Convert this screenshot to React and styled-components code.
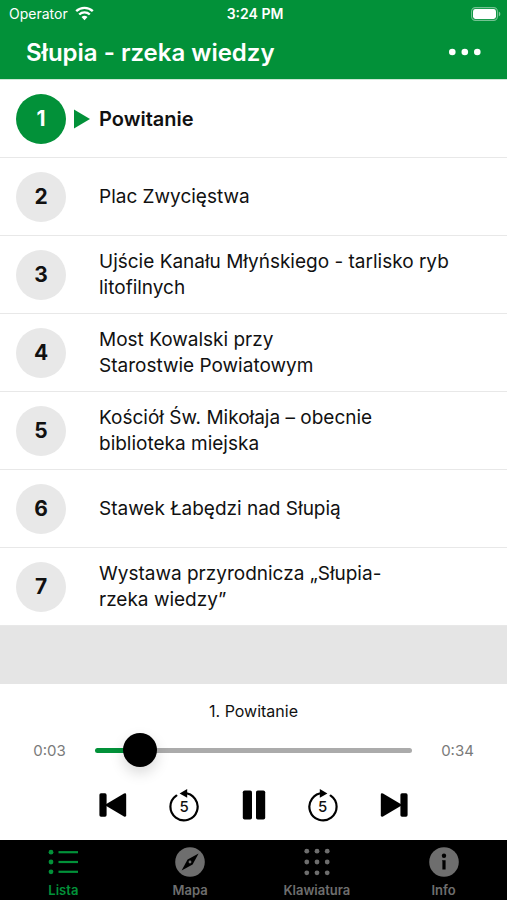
//libs
import styled, { createGlobalStyle } from "styled-components";
import { useState } from "react";

const TRACKS = [
    { id: 1, title: "Powitanie" },
    { id: 2, title: "Plac Zwycięstwa" },
    { id: 3, title: "Ujście Kanału Młyńskiego - tarlisko ryb litofilnych" },
    { id: 4, title: "Most Kowalski przy Starostwie\u00a0Powiatowym" },
    { id: 5, title: "Kościół Św. Mikołaja – obecnie biblioteka miejska" },
    { id: 6, title: "Stawek Łabędzi nad Słupią" },
    { id: 7, title: "Wystawa przyrodnicza „Słupia-rzeka\u00a0wiedzy”" },
];

const TABS = [
    { name: "Lista", Icon: ListIcon },
    { name: "Mapa", Icon: CompassIcon },
    { name: "Klawiatura", Icon: KeypadIcon },
    { name: "Info", Icon: InfoIcon },
];

const DURATION = 34;

function formatTime(seconds){
    const rest = Math.floor(seconds % 60);
    return `${Math.floor(seconds / 60)}:${String(rest).padStart(2, "0")}`;
}

export default function App(){
    const [ current, setCurrent ] = useState(1);
    const [ time, setTime ] = useState(3.4);
    const [ playing, setPlaying ] = useState(true);
    const [ tab, setTab ] = useState("Lista");

    function selectTrack(id){
        if(id < 1 || id > TRACKS.length) return;
        setCurrent(id);
        setTime(0);
    }

    function skip(seconds){
        setTime(Math.min(DURATION, Math.max(0, time + seconds)));
    }

    return(
        <Screen>
            <GlobalStyle />
            <Header>
                <StatusBar>
                    <Operator>Operator <WifiIcon /></Operator>
                    <Clock>3:24 PM</Clock>
                    <BatteryIcon />
                </StatusBar>
                <TitleBar>
                    <Title>Słupia - rzeka wiedzy</Title>
                    <MenuButton aria-label="Menu"><DotsIcon /></MenuButton>
                </TitleBar>
            </Header>
            <TrackList>
                {TRACKS.map(({ id, title }) => (
                    <li key={id}>
                        <Track $active={id === current} onClick={() => selectTrack(id)}>
                            <TrackNumber $active={id === current}>{id}</TrackNumber>
                            <Marker>{id === current && <PlayMarkIcon />}</Marker>
                            <TrackTitle>{title}</TrackTitle>
                        </Track>
                    </li>
                ))}
            </TrackList>
            <Player>
                <NowPlaying>{current}. {TRACKS[current - 1].title}</NowPlaying>
                <Progress>
                    <Time>{formatTime(time)}</Time>
                    <Slider
                        type="range"
                        aria-label="Postęp"
                        min="0"
                        max={DURATION}
                        step="0.1"
                        value={time}
                        onChange={(e) => setTime(Number(e.target.value))}
                        style={{ "--played": `${(time / DURATION) * 100}%` }}
                    />
                    <Time>{formatTime(DURATION)}</Time>
                </Progress>
                <Controls>
                    <ControlButton aria-label="Poprzedni" onClick={() => selectTrack(current - 1)}><PreviousIcon /></ControlButton>
                    <ControlButton aria-label="Cofnij o 5 sekund" onClick={() => skip(-5)}>
                        <SkipLoop><RewindIcon /><span>5</span></SkipLoop>
                    </ControlButton>
                    <ControlButton aria-label={playing ? "Pauza" : "Odtwórz"} onClick={() => setPlaying(!playing)}>
                        {playing ? <PauseIcon /> : <PlayIcon />}
                    </ControlButton>
                    <ControlButton aria-label="Przewiń o 5 sekund" onClick={() => skip(5)}>
                        <SkipLoop><ForwardIcon /><span>5</span></SkipLoop>
                    </ControlButton>
                    <ControlButton aria-label="Następny" onClick={() => selectTrack(current + 1)}><NextIcon /></ControlButton>
                </Controls>
            </Player>
            <TabBar>
                {TABS.map(({ name, Icon }) => (
                    <Tab key={name} $active={name === tab} onClick={() => setTab(name)}>
                        <Icon />
                        {name}
                    </Tab>
                ))}
            </TabBar>
        </Screen>
    );
}

//icons
function WifiIcon(){
    return(
        <svg width="19" height="15" viewBox="0 0 19 15" fill="none" stroke="#fff" strokeWidth="2.4">
            <path d="M1.2 5.2a12 12 0 0 1 16.6 0" />
            <path d="M4.2 8.5a7.6 7.6 0 0 1 10.6 0" />
            <path d="M9.5 14.2l-3-3.1a4.3 4.3 0 0 1 6 0z" fill="#fff" stroke="none" />
        </svg>
    );
}

function BatteryIcon(){
    return(
        <svg width="30" height="14" viewBox="0 0 30 14">
            <rect x="0.6" y="0.6" width="25.8" height="12.8" rx="3.8" fill="none" stroke="#fff" strokeOpacity="0.45" strokeWidth="1.1" />
            <rect x="2" y="2" width="23" height="10" rx="2.4" fill="#fff" />
            <path d="M27.8 4.6a2.6 2.6 0 0 1 0 4.8z" fill="#fff" fillOpacity="0.5" />
        </svg>
    );
}

function DotsIcon(){
    return(
        <svg width="32" height="8" viewBox="0 0 32 8" fill="#fff">
            <circle cx="3.3" cy="4" r="3.3" />
            <circle cx="15.8" cy="4" r="3.3" />
            <circle cx="28.3" cy="4" r="3.3" />
        </svg>
    );
}

function PlayMarkIcon(){
    return(
        <svg width="16" height="20" viewBox="0 0 16 20" fill="#029139">
            <path d="M0 0.5L16 10L0 19.5z" />
        </svg>
    );
}

function PreviousIcon(){
    return(
        <svg width="28" height="24" viewBox="0 0 28 24">
            <rect x="0.4" y="0.3" width="7.2" height="23.4" rx="1.6" />
            <path d="M6.5 12.6v-1.2L25 0.6q2.2-0.8 2.2 1.2v20.4q0 2-2.2 1.2z" />
        </svg>
    );
}

function NextIcon(){
    return(
        <svg width="28" height="24" viewBox="0 0 28 24">
            <rect x="20.4" y="0.3" width="7.2" height="23.4" rx="1.6" />
            <path d="M21.5 12.6v-1.2L3 0.6Q0.8-0.2 0.8 1.8v20.4q0 2 2.2 1.2z" />
        </svg>
    );
}

function RewindIcon(){
    return(
        <svg width="32" height="34" viewBox="0 0 32 34">
            <path d="M16 5.2A13.6 13.6 0 1 1 8.3 7.6" fill="none" stroke="#000" strokeWidth="2.2" strokeLinecap="round" />
            <path d="M11.6 5.4L19.2 1v8.8z" />
        </svg>
    );
}

function ForwardIcon(){
    return(
        <svg width="32" height="34" viewBox="0 0 32 34">
            <path d="M16 5.2A13.6 13.6 0 1 0 23.7 7.6" fill="none" stroke="#000" strokeWidth="2.2" strokeLinecap="round" />
            <path d="M20.4 5.4L12.8 1v8.8z" />
        </svg>
    );
}

function PauseIcon(){
    return(
        <svg width="24" height="30" viewBox="0 0 24 30">
            <rect x="0.8" y="0.4" width="9.2" height="29.2" rx="1.8" />
            <rect x="14" y="0.4" width="9.2" height="29.2" rx="1.8" />
        </svg>
    );
}

function PlayIcon(){
    return(
        <svg width="24" height="30" viewBox="0 0 24 30">
            <path d="M1 1L23 15L1 29z" />
        </svg>
    );
}

function ListIcon(){
    return(
        <svg width="30" height="30" viewBox="0 0 30 30" fill="currentColor">
            <circle cx="3" cy="5.2" r="2.4" />
            <circle cx="3" cy="15" r="2.4" />
            <circle cx="3" cy="24.8" r="2.4" />
            <rect x="10.5" y="4.1" width="19.5" height="2.2" />
            <rect x="10.5" y="13.9" width="19.5" height="2.2" />
            <rect x="10.5" y="23.7" width="19.5" height="2.2" />
        </svg>
    );
}

function CompassIcon(){
    return(
        <svg width="30" height="30" viewBox="0 0 30 30">
            <circle cx="15" cy="15" r="14.8" fill="currentColor" />
            <path d="M23.6 6.6L17.6 17.4L6.6 23.4L12.6 12.6z" fill="#000" />
            <circle cx="15" cy="15" r="1.4" fill="currentColor" />
        </svg>
    );
}

function KeypadIcon(){
    const rows = [4.2, 15, 25.8];
    const columns = [4.8, 15, 25.2];

    return(
        <svg width="30" height="30" viewBox="0 0 30 30" fill="currentColor">
            {rows.map((cy) => columns.map((cx) => <circle key={`${cx}-${cy}`} cx={cx} cy={cy} r="2.4" />))}
        </svg>
    );
}

function InfoIcon(){
    return(
        <svg width="30" height="30" viewBox="0 0 30 30">
            <circle cx="15" cy="15" r="14.8" fill="currentColor" />
            <circle cx="15" cy="8.8" r="2.2" fill="#000" />
            <path d="M13 13.2h3.6v9.4h-3.2v-8z" fill="#000" />
        </svg>
    );
}

const GlobalStyle = createGlobalStyle`
    * {
        box-sizing: border-box;
    }

    body {
        margin: 0;
        font-family: 'Inter', 'Liberation Sans', sans-serif;
        color: #111111;
    }

    button {
        padding: 0;
        border: none;
        background: none;
        font-family: inherit;
        color: inherit;
        cursor: pointer;
    }

    svg {
        display: block;
        flex-shrink: 0;
    }
`

const Screen = styled.div`
    min-height: 100vh;
    display: flex;
    flex-direction: column;
`

const Header = styled.header`
    padding-bottom: 2px;
    border-bottom: 1px solid #CDE8D6;
    background: #029139;
    color: #FFFFFF;
`

const StatusBar = styled.div`
    height: 27px;
    padding: 0 6px 0 9px;
    display: grid;
    grid-template-columns: 1fr auto 1fr;
    align-items: center;
    font-size: 14px;

    > :last-child {
        justify-self: end;
    }
`

const Operator = styled.span`
    display: flex;
    align-items: center;
    gap: 7px;
`

const Clock = styled.span`
    font-weight: 600;
`

const TitleBar = styled.div`
    height: 50px;
    padding: 0 26px;
    display: flex;
    align-items: center;
    justify-content: space-between;
`

const Title = styled.h1`
    margin: 0;
    font-weight: 600;
    font-size: 24px;
`

const MenuButton = styled.button`
    height: 32px;
`

const TrackList = styled.ol`
    flex: 1;
    margin: 0;
    padding: 0 0 57px;
    list-style: none;
    background: #E5E5E5;
`

const Track = styled.button`
    width: 100%;
    min-height: 78px;
    padding: 13px 48px 12px 16px;
    display: flex;
    align-items: center;
    border-bottom: 1px solid #E8E8E8;
    background: #FFFFFF;
    text-align: left;
    font-weight: ${(props) => props.$active ? 600 : 400};
    font-size: ${(props) => props.$active ? 20 : 19}px;
    line-height: 26px;
`

const TrackNumber = styled.span`
    width: 50px;
    height: 50px;
    flex-shrink: 0;
    display: flex;
    align-items: center;
    justify-content: center;
    border-radius: 50%;
    background: ${(props) => props.$active ? "#029139" : "#E8E8E8"};
    color: ${(props) => props.$active ? "#FFFFFF" : "#111111"};
    font-weight: 700;
    font-size: 21px;
`

const Marker = styled.span`
    width: 33px;
    flex-shrink: 0;
    padding-left: 8px;
`

const TrackTitle = styled.span`
    flex: 1;
`

const Player = styled.section`
    padding: 15px 32px 17px;
    background: #FFFFFF;
`

const NowPlaying = styled.p`
    margin: 0 0 10px;
    text-align: center;
    font-size: 16px;
    line-height: 24px;
`

const Progress = styled.div`
    height: 34px;
    display: flex;
    align-items: center;
    justify-content: space-between;
    gap: 28px;
`

const Time = styled.span`
    width: 35px;
    text-align: center;
    white-space: nowrap;
    font-size: 15px;
    color: #7A7A7A;
`

const Slider = styled.input`
    flex: 1;
    min-width: 0;
    height: 34px;
    margin: 0;
    appearance: none;
    background: none;

    &::-webkit-slider-runnable-track {
        height: 5px;
        border-radius: 3px;
        background: linear-gradient(to right, #029139 var(--played), #ABABAB var(--played));
    }

    &::-webkit-slider-thumb {
        appearance: none;
        width: 34px;
        height: 34px;
        margin-top: -15px;
        border-radius: 50%;
        background: #000000;
        box-shadow: 0 6px 14px rgba(0, 0, 0, 0.15);
    }
`

const Controls = styled.div`
    margin-top: 20px;
    padding: 0 67px;
    display: flex;
    align-items: center;
    justify-content: space-between;
`

const ControlButton = styled.button`
    height: 36px;
    display: flex;
    align-items: center;
    justify-content: center;
`

const SkipLoop = styled.span`
    display: grid;
    place-items: center;

    > * {
        grid-area: 1 / 1;
    }

    span {
        padding-top: 4px;
        font-weight: 500;
        font-size: 15px;
        line-height: 18px;
    }
`

const TabBar = styled.nav`
    height: 60px;
    display: flex;
    background: #000000;
`

const Tab = styled.button`
    flex: 1;
    padding-top: 7px;
    display: flex;
    flex-direction: column;
    align-items: center;
    gap: 5px;
    font-weight: 600;
    font-size: 13px;
    line-height: 16px;

    && {
        color: ${(props) => props.$active ? "#029139" : "#6E6E6E"};
    }
`
